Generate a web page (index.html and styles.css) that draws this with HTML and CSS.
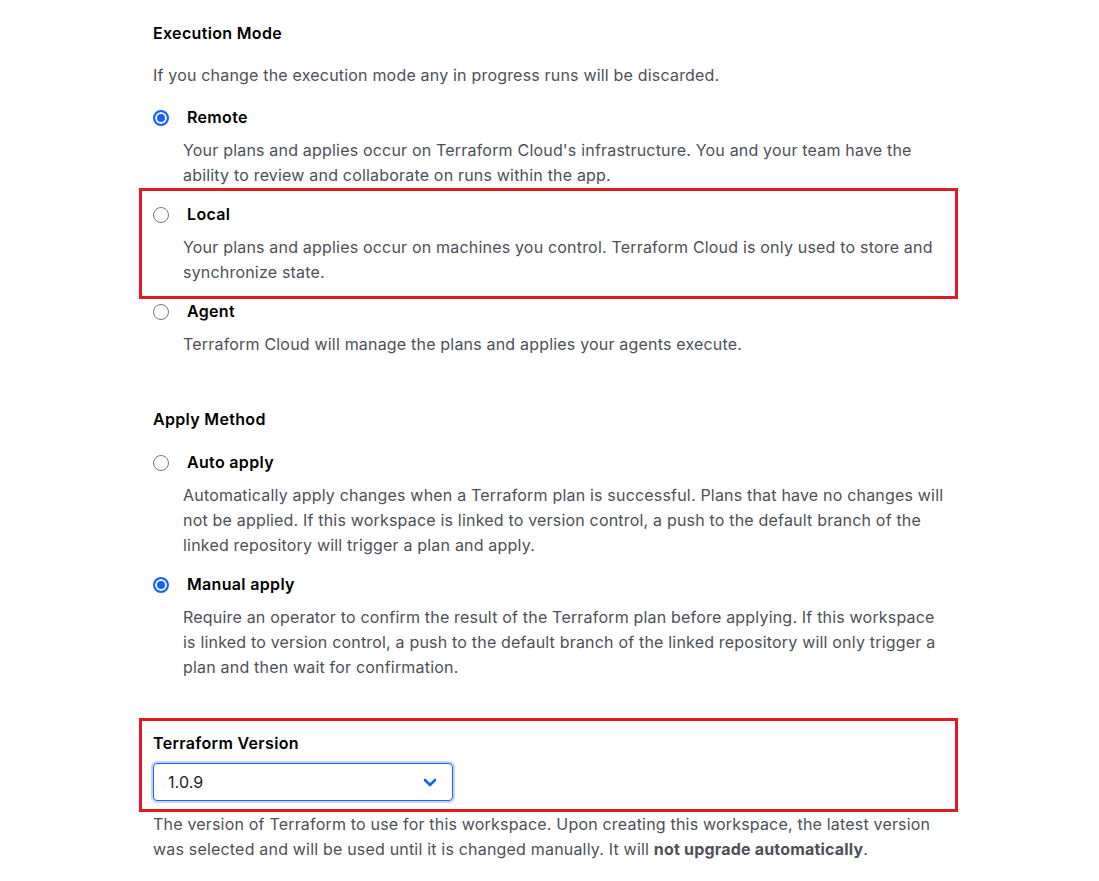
FILE: index.html
```html
<!DOCTYPE html>
<html lang="en">
<head>
<meta charset="utf-8">
<title>Workspace settings</title>
<link rel="stylesheet" href="styles.css">
</head>
<body>
<main class="page">
  <section class="section">
    <h2 class="section-title">Execution Mode</h2>
    <p class="section-desc">If you change the execution mode any in progress runs will be discarded.</p>
    <div class="options">
      <div class="option">
        <div class="option-head"><span class="radio checked"></span><span class="option-label">Remote</span></div>
        <p class="option-desc">Your plans and applies occur on Terraform Cloud's infrastructure. You and your team have the ability to review and collaborate on runs within the app.</p>
      </div>
      <div class="option highlight">
        <div class="option-head"><span class="radio"></span><span class="option-label">Local</span></div>
        <p class="option-desc">Your plans and applies occur on machines you control. Terraform Cloud is only used to store and synchronize state.</p>
      </div>
      <div class="option">
        <div class="option-head"><span class="radio"></span><span class="option-label">Agent</span></div>
        <p class="option-desc">Terraform Cloud will manage the plans and applies your agents execute.</p>
      </div>
    </div>
  </section>

  <section class="section">
    <h2 class="section-title">Apply Method</h2>
    <div class="options">
      <div class="option">
        <div class="option-head"><span class="radio"></span><span class="option-label">Auto apply</span></div>
        <p class="option-desc">Automatically apply changes when a Terraform plan is successful. Plans that have no changes will not be applied. If this workspace is linked to version control, a push to the default branch of the linked repository will trigger a plan and apply.</p>
      </div>
      <div class="option">
        <div class="option-head"><span class="radio checked"></span><span class="option-label">Manual apply</span></div>
        <p class="option-desc">Require an operator to confirm the result of the Terraform plan before applying. If this workspace is linked to version control, a push to the default branch of the linked repository will only trigger a plan and then wait for confirmation.</p>
      </div>
    </div>
  </section>

  <section class="section version">
    <div class="version-box">
      <h2 class="field-title">Terraform Version</h2>
      <div class="select">
        <span class="select-value">1.0.9</span>
        <svg class="chevron" width="14" height="9" viewBox="0 0 14 9" aria-hidden="true"><path d="M2 2l5 5 5-5" fill="none" stroke="#1563ff" stroke-width="2.6" stroke-linecap="round" stroke-linejoin="round"/></svg>
      </div>
    </div>
    <p class="help">The version of Terraform to use for this workspace. Upon creating this workspace, the latest version was selected and will be used until it is changed manually. It will <strong>not upgrade automatically</strong>.</p>
  </section>
</main>
</body>
</html>
```

FILE: styles.css
```css
* { box-sizing: border-box; }
html, body { margin: 0; padding: 0; background: #fff; }
body {
  font-family: Inter, "Noto Sans", "Liberation Sans", sans-serif;
  font-size: 16px;
  line-height: 25px;
  letter-spacing: 0.19px;
  color: #4d5058;
}
.page {
  width: 791px;
  margin-left: 153px;
  padding-top: 21px;
}
h2, p { margin: 0; }
.section { display: flex; flex-direction: column; }
.section + .section { margin-top: 50px; }
.section-title, .field-title {
  font-size: 16px;
  font-weight: 600;
  letter-spacing: 0.33px;
  color: #000;
}
.section-desc { margin-top: 17px; margin-bottom: 17px; }
.section-title + .options { margin-top: 18px; }
.options { display: flex; flex-direction: column; gap: 14px; }
.option-head { display: flex; align-items: center; }
.radio {
  width: 16px; height: 16px;
  border-radius: 50%;
  border: 1.5px solid #737884;
  flex: none;
  background: #fff;
}
.radio.checked {
  border: 2px solid #1563ff;
  background: #1563ff;
  box-shadow: inset 0 0 0 2px #fff;
}
.option-label {
  margin-left: 18px;
  font-weight: 600;
  letter-spacing: 0.33px;
  color: #000;
}
.option-desc {
  margin-top: 8px;
  padding-left: 30px;
}
.option.highlight {
  margin: -14px -14px -14px;
  padding: 11px 11px 11px;
  border: 3px solid #e01b22;
}
.section.version { margin-top: 38px; }
.version-box {
  margin: 0 -14px;
  padding: 10px 11px 8px;
  border: 3px solid #e01b22;
}
.select {
  margin-top: 7px;
  width: 300px;
  height: 38px;
  border: 1px solid #1563ff;
  border-radius: 4px;
  box-shadow: 0 0 0 2px #c5d6fb;
  display: flex;
  align-items: center;
  justify-content: space-between;
  padding: 0 15px 0 14px;
}
.select-value { color: #1b1d21; letter-spacing: 0.1px; }
.chevron { display: block; }
.help strong { font-weight: 700; color: #4d5058; }
```
